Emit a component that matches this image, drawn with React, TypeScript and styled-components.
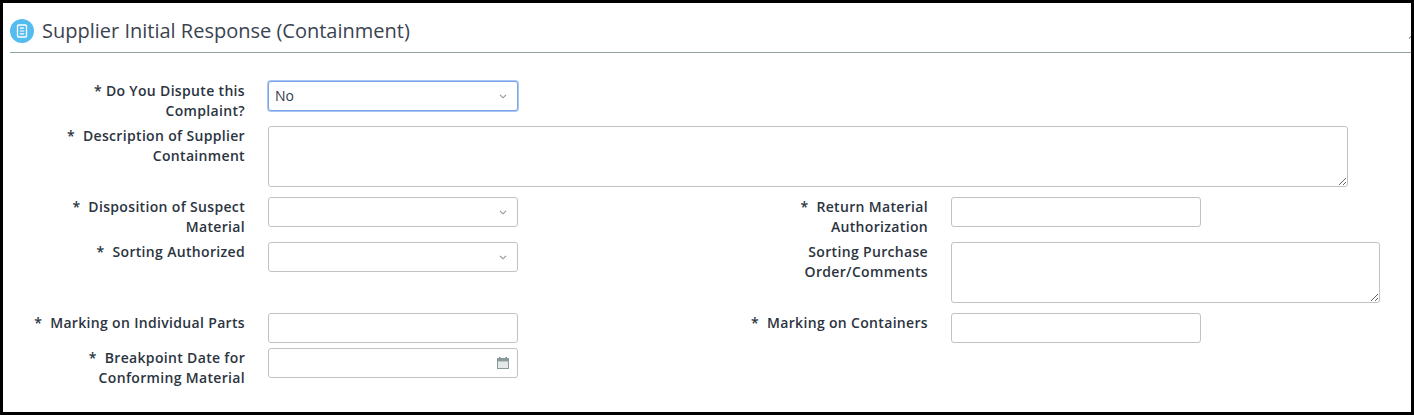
import styled, { createGlobalStyle } from "styled-components"

const GlobalStyle = createGlobalStyle`
  html, body {
    margin: 0;
    background: #fff;
  }
  * {
    box-sizing: border-box;
  }
`

const Frame = styled.div`
  width: 1414px;
  height: 415px;
  border: 3px solid #000;
  padding-left: 7px;
  background: #fff;
  overflow: hidden;
  font-family: "Open Sans", "Liberation Sans", sans-serif;
`

const Header = styled.div`
  display: flex;
  align-items: center;
  height: 50px;
  padding-top: 7px;
  border-bottom: 1px solid #8fa5a1;
`

const Badge = styled.span`
  flex: none;
  display: flex;
  align-items: center;
  justify-content: center;
  width: 24px;
  height: 24px;
  border-radius: 50%;
  background: #55bcf0;
`

const Title = styled.h2`
  flex: 1;
  margin: 0 0 0 8px;
  font-size: 20px;
  line-height: 28px;
  font-weight: 400;
  color: #3a4350;
`

const Collapse = styled.svg`
  flex: none;
  margin: 11px -7px 0 0;
`

const Form = styled.div`
  padding-top: 28px;
`

const Row = styled.div`
  display: flex;
  align-items: flex-start;
`

const Field = styled.div`
  display: flex;
  align-items: flex-start;
  flex: none;
  width: 683px;
`

const Label = styled.label<{ $wrap?: boolean }>`
  flex: none;
  width: 235px;
  min-height: ${(p) => (p.$wrap ? 45 : 35)}px;
  padding-bottom: 5px;
  text-align: right;
  white-space: pre-wrap;
  font-size: 14px;
  line-height: 20px;
  font-weight: 600;
  letter-spacing: 0.33px;
  color: #2b3440;
`

const Control = styled.div<{ $width: number }>`
  position: relative;
  flex: none;
  margin-left: 23px;
  width: ${(p) => p.$width}px;
`

const Input = styled.input`
  display: block;
  width: 100%;
  height: 30px;
  padding: 0 6px;
  border: 1px solid #bfc3c5;
  border-radius: 3px;
  background: #fff;
  outline: none;
`

const Select = styled.select<{ $focused?: boolean }>`
  display: block;
  appearance: none;
  width: 100%;
  height: 30px;
  padding: 0 6px 2px;
  border: 1px solid ${(p) => (p.$focused ? "#7ba6ea" : "#bfc3c5")};
  box-shadow: ${(p) => (p.$focused ? "0 0 0 1px #a9c6f2" : "none")};
  border-radius: 3px;
  background: #fff;
  outline: none;
  font-family: inherit;
  font-size: 14px;
  color: #333c48;
`

const TextArea = styled.textarea`
  display: block;
  width: 100%;
  height: 61px;
  margin-bottom: 10px;
  border: 1px solid #bfc3c5;
  border-radius: 3px;
  background: #fff;
  outline: none;
  resize: both;
`

const OverIcon = styled.svg`
  position: absolute;
  top: 50%;
  right: 9px;
  transform: translateY(-50%);
  pointer-events: none;
`

const CalendarGlyph = styled(OverIcon)`
  top: 8px;
  right: 8px;
  transform: none;
`

const Chevron = () => (
  <OverIcon width="12" height="12" viewBox="0 0 12 12" fill="none">
    <path d="M3 4.8 6 7.8 9 4.8" stroke="#8b9598" strokeWidth="1.1" />
  </OverIcon>
)

const CalendarIcon = () => (
  <CalendarGlyph width="14" height="14" viewBox="0 0 14 14">
    <path d="M1 2h12v11H1z" fill="#8a9a9a" />
    <path d="M3 1h1.4v2H3zM9.6 1H11v2H9.6z" fill="#7f8f8f" />
    <path d="M2 5.4h10V12H2z" fill="#e3e8e8" />
  </CalendarGlyph>
)

function App() {
  return (
    <>
      <GlobalStyle />
      <Frame>
        <Header>
          <Badge>
            <svg width="14" height="14" viewBox="0 0 14 14" fill="none">
              <rect x="2.5" y="1" width="9" height="12" rx="1" stroke="#fff" strokeWidth="1.3" />
              <path d="M4.8 4.2h4.4M4.8 7h4.4M4.8 9.8h4.4" stroke="#fff" strokeWidth="1.2" />
            </svg>
          </Badge>
          <Title>Supplier Initial Response (Containment)</Title>
          <Collapse width="10" height="10" viewBox="0 0 10 10" fill="none">
            <path d="M1 6.5 4 3.5 7 6.5" stroke="#8b9598" strokeWidth="1.2" />
          </Collapse>
        </Header>
        <Form>
          <Row>
            <Field>
              <Label $wrap>{"* Do You Dispute this\nComplaint?"}</Label>
              <Control $width={250}>
                <Select $focused defaultValue="No">
                  <option>No</option>
                  <option>Yes</option>
                </Select>
                <Chevron />
              </Control>
            </Field>
          </Row>
          <Row>
            <Field>
              <Label $wrap>{"*  Description of Supplier\nContainment"}</Label>
              <Control $width={1080}>
                <TextArea />
              </Control>
            </Field>
          </Row>
          <Row>
            <Field>
              <Label $wrap>{"*  Disposition of Suspect\nMaterial"}</Label>
              <Control $width={250}>
                <Select />
                <Chevron />
              </Control>
            </Field>
            <Field>
              <Label $wrap>{"*  Return Material\nAuthorization"}</Label>
              <Control $width={250}>
                <Input />
              </Control>
            </Field>
          </Row>
          <Row>
            <Field>
              <Label>{"*  Sorting Authorized"}</Label>
              <Control $width={250}>
                <Select />
                <Chevron />
              </Control>
            </Field>
            <Field>
              <Label $wrap>{"Sorting Purchase\nOrder/Comments"}</Label>
              <Control $width={429}>
                <TextArea />
              </Control>
            </Field>
          </Row>
          <Row>
            <Field>
              <Label>{"*  Marking on Individual Parts"}</Label>
              <Control $width={250}>
                <Input />
              </Control>
            </Field>
            <Field>
              <Label>{"*  Marking on Containers"}</Label>
              <Control $width={250}>
                <Input />
              </Control>
            </Field>
          </Row>
          <Row>
            <Field>
              <Label $wrap>{"*  Breakpoint Date for\nConforming Material"}</Label>
              <Control $width={250}>
                <Input />
                <CalendarIcon />
              </Control>
            </Field>
          </Row>
        </Form>
      </Frame>
    </>
  )
}

export default App
